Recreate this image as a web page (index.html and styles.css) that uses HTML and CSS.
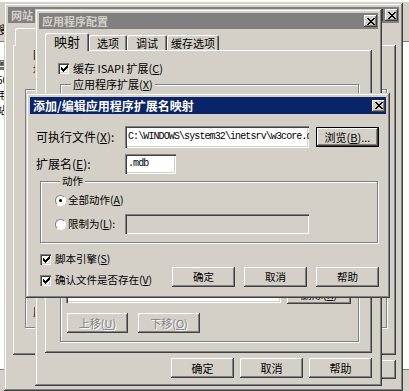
FILE: index.html
```html
<!DOCTYPE html>
<html lang="zh-CN">
<head>
<meta charset="utf-8">
<title>添加/编辑应用程序扩展名映射</title>
<link rel="stylesheet" href="styles.css">
</head>
<body>
<div class="desk">

  <!-- back-most console window -->
  <div class="mmc">
    <div class="mmc-bar"><span class="mmc-tool">搜</span></div>
    <div class="mmc-list">
      <div class="mmc-row">置</div>
      <div class="mmc-row">50</div>
      <div class="mmc-row">用</div>
      <div class="mmc-row">站</div>
      <div class="mmc-row">.</div>
    </div>
  </div>

  <!-- 网站 属性 -->
  <div class="win win-b">
    <div class="title inactive">
      <span class="ttext">网站 属性</span>
      <span class="tbtns"><span class="tbtn q">?</span><span class="tbtn"><svg class="xg" width="8" height="7" viewBox="0 0 8 7"><path d="M0 0h2v1h1v1h2V1h1V0h2v1h-1v1h-1v1h-1v1h1v1h1v1h1v1h-2v-1h-1v-1h-2v1h-1v1h-2v-1h1v-1h1v-1h1v-1h-1v-1h-1v-1h-1z"/></svg></span></span>
    </div>
    <div class="b-body">
      <div class="tabs b-tabs"><div class="tab sel b-tab">目录</div></div>
      <div class="panel b-panel">
        <div class="b-text">网站标识</div>
        <div class="b-text">地址</div>
        <div class="grp b-grp">
          <div class="b-text2">应用程序名</div>
        </div>
      </div>
      <div class="btns b-btns"><div class="btn">确定</div><div class="btn">取消</div><div class="btn b-last">帮助</div></div>
    </div>
  </div>

  <!-- 应用程序配置 -->
  <div class="win win-c">
    <div class="title inactive c-title">
      <span class="ttext">应用程序配置</span>
      <span class="tbtn"><svg class="xg" width="8" height="7" viewBox="0 0 8 7"><path d="M0 0h2v1h1v1h2V1h1V0h2v1h-1v1h-1v1h-1v1h1v1h1v1h1v1h-2v-1h-1v-1h-2v1h-1v1h-2v-1h1v-1h1v-1h1v-1h-1v-1h-1v-1h-1z"/></svg></span>
    </div>
    <div class="c-body">
      <div class="tabs">
        <div class="tab sel t1">映射</div>
        <div class="tab t2">选项</div>
        <div class="tab t3">调试</div>
        <div class="tab t4">缓存选项</div>
      </div>
      <div class="panel c-panel">
        <div class="check-row c-check"><span class="check"><svg width="7" height="7" viewBox="0 0 7 7"><path d="M0 2h1v1h1v1h1V3h1V2h1V1h1V0h1v3H6v1H5v1H4v1H3v1H2V6H1V5H0z"/></svg></span><span>缓存 ISAPI 扩展(<u>C</u>)</span></div>
        <div class="grp c-grp">
          <div class="grp-label">应用程序扩展(<u>X</u>)</div>
          <div class="lv-row">
            <div class="listview"></div>
            <div class="lv-btns"><div class="btn lv-btn">删除(<u>R</u>)</div></div>
          </div>
          <div class="mv-row">
            <div class="btn dis mv1">上移(<u>U</u>)</div>
            <div class="btn dis mv2">下移(<u>O</u>)</div>
          </div>
        </div>
      </div>
      <div class="btns c-btns"><div class="btn">确定</div><div class="btn">取消</div><div class="btn">帮助</div></div>
    </div>
  </div>

  <!-- 添加/编辑应用程序扩展名映射 (active) -->
  <div class="win win-d">
    <div class="title d-title">
      <span class="ttext">添加/编辑应用程序扩展名映射</span>
      <span class="tbtn"><svg class="xg" width="8" height="7" viewBox="0 0 8 7"><path d="M0 0h2v1h1v1h2V1h1V0h2v1h-1v1h-1v1h-1v1h1v1h1v1h1v1h-2v-1h-1v-1h-2v1h-1v1h-2v-1h1v-1h1v-1h1v-1h-1v-1h-1v-1h-1z"/></svg></span>
    </div>
    <div class="d-body">
      <div class="d-row r1">
        <span class="lbl">可执行文件(<u>X</u>):</span>
        <div class="field f-exe">C:\WINDOWS\system32\inetsrv\w3core.dll</div>
        <div class="btn default">浏览(<u>B</u>)...</div>
      </div>
      <div class="d-row r2">
        <span class="lbl">扩展名(<u>E</u>):</span>
        <div class="field f-ext">.mdb</div>
      </div>
      <div class="grp d-grp">
        <div class="grp-label">动作</div>
        <div class="radio-row rr1"><span class="radio on"></span><span>全部动作(<u>A</u>)</span></div>
        <div class="radio-row rr2"><span class="radio"></span><span class="rlbl">限制为(<u>L</u>):</span><div class="field dis f-limit"></div></div>
      </div>
      <div class="d-foot">
        <div class="checks">
          <div class="check-row"><span class="check"><svg width="7" height="7" viewBox="0 0 7 7"><path d="M0 2h1v1h1v1h1V3h1V2h1V1h1V0h1v3H6v1H5v1H4v1H3v1H2V6H1V5H0z"/></svg></span><span>脚本引擎(<u>S</u>)</span></div>
          <div class="check-row"><span class="check"><svg width="7" height="7" viewBox="0 0 7 7"><path d="M0 2h1v1h1v1h1V3h1V2h1V1h1V0h1v3H6v1H5v1H4v1H3v1H2V6H1V5H0z"/></svg></span><span>确认文件是否存在(<u>V</u>)</span></div>
        </div>
        <div class="btns d-btns"><div class="btn">确定</div><div class="btn">取消</div><div class="btn">帮助</div></div>
      </div>
    </div>
  </div>

</div>
</body>
</html>
```

FILE: styles.css
```css
* { box-sizing: border-box; }
html, body { margin: 0; padding: 0; }
body {
  width: 409px;
  height: 391px;
  overflow: hidden;
  background: #d4d0c8;
  font-family: "Noto Sans CJK SC", "Noto Sans", sans-serif;
  font-size: 11px;
  line-height: 14px;
  color: #000;
}
u { text-decoration: underline; text-underline-offset: 1px; }

.desk { position: relative; width: 409px; height: 391px; overflow: hidden; }

/* ---------- back console ---------- */
.mmc {
  position: absolute;
  z-index: 0;
  left: 0; top: 0; width: 409px; height: 391px;
  background: #d4d0c8;
  border-top: 2px solid #fff;
  display: flex;
  flex-direction: column;
}
.mmc-bar { height: 40px; padding: 20px 0 0 0; border-bottom: 1px solid #808080; }
.mmc-tool { display: block; margin-left: -4px; font-size: 11px; }
.mmc-list { height: 328px; background: #fff; border-bottom: 1px solid #808080; padding-top: 16px; }
.mmc-row { height: 14px; margin-left: -3px; font-size: 10px; line-height: 14px; margin-bottom: 1px; }

/* ---------- generic window ---------- */
.win {
  position: absolute;
  background: #d4d0c8;
  padding: 4px;
  display: flex;
  flex-direction: column;
  box-shadow: inset -1px -1px #404040, inset 1px 1px #d4d0c8, inset -2px -2px #808080, inset 2px 2px #fff;
}
.title {
  flex: none;
  height: 17px;
  display: flex;
  align-items: center;
  justify-content: space-between;
  padding: 0 1px 0 3px;
  background: #0a246a;
  color: #fff;
  font-weight: bold;
  font-size: 12px;
  white-space: nowrap;
  overflow: hidden;
}
.title.inactive { background: #808080; color: #d4d0c8; font-size: 11px; }
.tbtns { display: flex; gap: 2px; }
.tbtn {
  width: 13px; height: 12px;
  flex: none;
  display: flex; align-items: center; justify-content: center;
  background: #d4d0c8;
  color: #000;
  font-size: 10px; line-height: 12px;
  box-shadow: inset -1px -1px #404040, inset 1px 1px #fff, inset -2px -2px #808080, inset 2px 2px #d4d0c8;
}
.xg { display: block; fill: #000; }

.btn {
  height: 20px;
  width: 63px;
  flex: none;
  display: flex; align-items: center; justify-content: center;
  background: #d4d0c8;
  font-size: 11px;
  white-space: nowrap;
  box-shadow: inset -1px -1px #404040, inset 1px 1px #fff, inset -2px -2px #808080, inset 2px 2px #d4d0c8;
}
.btn.default { border: 1px solid #000; }
.btn.dis { color: #808080; text-shadow: 1px 1px 0 #fff; }

.field {
  background: #fff;
  height: 20px;
  flex: none;
  padding: 3px 0 0 3px;
  overflow: hidden;
  white-space: nowrap;
  font-family: "Liberation Mono", monospace;
  font-size: 10px;
  letter-spacing: -0.9px;
  line-height: 14px;
  box-shadow: inset 1px 1px #808080, inset 2px 2px #404040, inset -1px -1px #fff, inset -2px -2px #d4d0c8;
}
.field.dis { background: #d4d0c8; }

.grp {
  border: 1px solid #808080;
  box-shadow: inset 1px 1px #fff, 1px 1px 0 #fff;
}
.grp-label {
  width: max-content;
  height: 14px;
  line-height: 14px;
  margin: -8px 0 0 5px;
  padding: 0 2px;
  background: #d4d0c8;
}

.check-row { display: flex; align-items: center; height: 16px; gap: 4px; white-space: nowrap; }
.check {
  width: 11px; height: 11px; flex: none;
  background: #fff;
  display: flex; align-items: center; justify-content: center;
  box-shadow: inset 1px 1px #808080, inset 2px 2px #404040, inset -1px -1px #fff, inset -2px -2px #d4d0c8;
}
.check svg { display: block; fill: #000; margin: 1px 0 0 1px; }
.radio-row { display: flex; align-items: center; white-space: nowrap; }
.radio {
  width: 11px; height: 11px; flex: none;
  border-radius: 50%;
  background: #fff;
  border: 1px solid;
  border-color: #808080 #fff #fff #808080;
  display: flex; align-items: center; justify-content: center;
}
.radio.on::after { content: ""; width: 3px; height: 3px; border-radius: 50%; background: #000; }

.tabs { display: flex; align-items: flex-end; height: 17px; flex: none; position: relative; z-index: 1; }
.tab {
  height: 15px;
  display: flex; align-items: center; justify-content: center;
  font-size: 11px;
  background: #d4d0c8;
  border-radius: 2px 2px 0 0;
  box-shadow: inset 1px 1px #fff, inset -1px 0 #404040, inset -2px 0 #808080;
  white-space: nowrap;
}
.tab.sel { height: 18px; margin-bottom: -1px; }
.panel {
  flex: none;
  background: #d4d0c8;
  box-shadow: inset -1px -1px #404040, inset 1px 1px #fff, inset -2px -2px #808080;
}
.btns { display: flex; flex: none; }

/* ---------- window B: 网站 属性 ---------- */
.win-b { z-index: 1; left: 4px; top: 3px; width: 399px; height: 388px; }
.win-b .title { height: 16px; }
.tbtn.q { font-weight: bold; }
.b-body { padding: 5px 3px 0 5px; display: flex; flex-direction: column; }
.b-tabs { padding-left: 2px; }
.b-tab { width: 60px; height: 17px; }
.b-panel { height: 310px; padding: 2px 0 0 20px; }
.b-text { height: 15px; line-height: 15px; font-size: 11px; }
.b-grp { margin: 12px 0 0 -8px; width: 362px; height: 239px; padding: 0 0 0 7px; }
.b-text2 { margin-top: 214px; font-size: 11px; }
.b-btns { margin-top: 5px; gap: 6px; justify-content: flex-end; }
.b-btns .btn { height: 19px; }

/* ---------- window C: 应用程序配置 ---------- */
.win-c { z-index: 2; left: 35px; top: 9px; width: 347px; height: 377px; }
.c-title { height: 16px; }
.c-body { padding: 4px 6px 4px 6px; display: flex; flex-direction: column; }
.t1 { width: 44px; font-size: 13px; }
.t2 { width: 38px; }
.t3 { width: 40px; }
.t4 { width: 52px; }
.c-panel { height: 303px; padding: 10px 13px 0 13px; }
.c-check { font-size: 11px; }
.c-grp { margin: 8px 0 0 2px; padding: 0 7px 8px 5px; }
.lv-row { display: flex; align-items: flex-end; gap: 6px; margin-top: 6px; height: 206px; }
.listview {
  width: 215px; height: 206px;
  background: #fff;
  box-shadow: inset 1px 1px #808080, inset 2px 2px #404040, inset -1px -1px #fff, inset -2px -2px #d4d0c8;
}
.lv-btn { width: 64px; margin-bottom: -1px; }
.mv-row { display: flex; gap: 10px; margin: 10px 0 0 1px; }
.mv1 { width: 61px; }
.mv2 { width: 62px; }
.c-btns { margin-top: 5px; gap: 6px; justify-content: flex-end; }

/* ---------- window D: 添加/编辑应用程序扩展名映射 ---------- */
.win-d { z-index: 3; left: 26px; top: 93px; width: 364px; height: 205px; }
.d-title { font-size: 12px; }
.d-body { padding: 6px 7px 0 6px; display: flex; flex-direction: column; }
.d-row { display: flex; align-items: center; }
.r1 { height: 22px; margin-top: 6px; }
.r2 { height: 20px; margin-top: 6px; }
.lbl { width: 89px; flex: none; font-size: 12px; white-space: nowrap; }
.f-exe { width: 184px; height: 22px; padding-top: 4px; margin-right: 7px; }
.f-ext { width: 51px; }
.d-grp { margin: 7px 1px 0 4px; padding: 0 0 8px 14px; font-size: 10.5px; }
.rr1 { height: 16px; margin-top: 4px; gap: 2px; }
.rr2 { height: 20px; margin-top: 6px; gap: 2px; }
.rlbl { width: 55px; }
.f-limit { width: 184px; }
.d-foot { display: flex; justify-content: space-between; margin: 8px 0 0 4px; font-size: 10.5px; }
.checks { display: flex; flex-direction: column; gap: 5px; }
.d-btns { gap: 9px; margin-top: 16px; }
.d-btns .btn { font-size: 10.5px; }
```
